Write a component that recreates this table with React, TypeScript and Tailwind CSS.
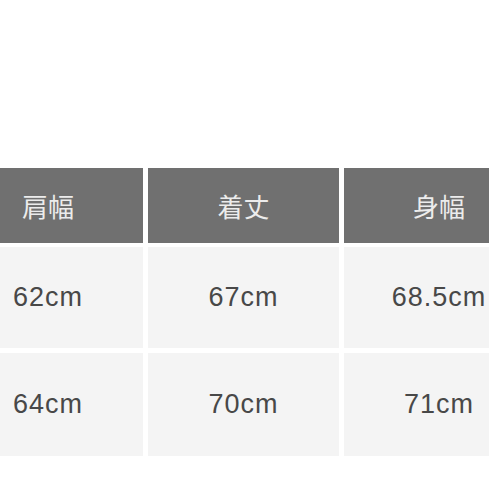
const headers = ['肩幅', '着丈', '身幅'];

const rows = [
  { h: 'h-[101px]', cells: ['62cm', '67cm', '68.5cm'] },
  { h: 'h-[103px]', cells: ['64cm', '70cm', '71cm'] },
];

const cols = 'grid grid-cols-[190px_191px_190px] gap-x-[5px]';

export default function App() {
  return (
    <div className="w-[489px] h-[489px] overflow-hidden bg-white">
      <div className="pt-[168px] -ml-[47px] w-[581px]">
        {/* header */}
        <div className={cols}>
          {headers.map((t) => (
            <div
              key={t}
              className="h-[75px] bg-[#707070] flex items-center justify-center text-[26px] text-[#ececec]"
              style={{ fontFamily: '"Noto Sans CJK JP", sans-serif' }}
            >
              {t}
            </div>
          ))}
        </div>

        {/* size rows */}
        <div className="mt-[4px] flex flex-col gap-y-[5px]">
          {rows.map((r, i) => (
            <div key={i} className={cols}>
              {r.cells.map((c, j) => (
                <div
                  key={j}
                  className={`${r.h} bg-[#f4f4f4] flex items-center justify-center text-[27px] tracking-[1px] text-[#484848]`}
                  style={{ fontFamily: '"Liberation Sans", Arial, sans-serif' }}
                >
                  {c}
                </div>
              ))}
            </div>
          ))}
        </div>
      </div>
    </div>
  );
}
